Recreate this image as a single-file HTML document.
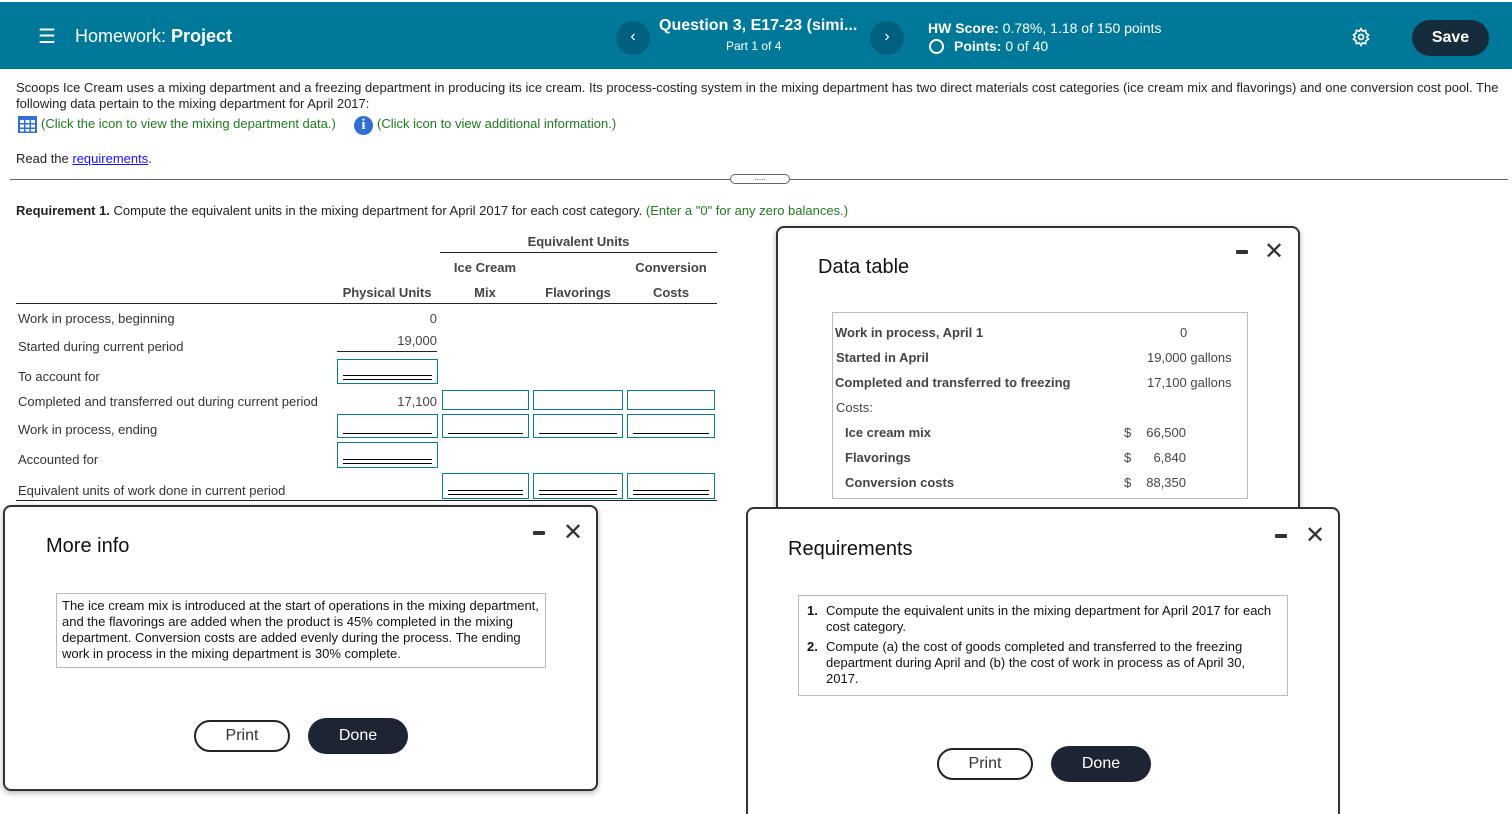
<!DOCTYPE html>
<html style="width:1512px;height:814px;overflow:hidden"><head><meta charset="utf-8"><style>
*{box-sizing:border-box;margin:0;padding:0}
body{width:1512px;height:814px;overflow:hidden;background:#fff;font-family:"Liberation Sans",Arial,sans-serif;color:#222;position:relative;font-size:13px}
.a{position:absolute;white-space:nowrap}
.hdr{position:absolute;left:0;top:2px;width:1512px;height:67px;background:#00789a;color:#fff}
.circ{position:absolute;width:34px;height:34px;border-radius:50%;background:#00607e;color:#fff;text-align:center;line-height:32px;font-size:16px}
.g{color:#1f7a1f}
.in{position:absolute;border:1px solid #0a7a9a;background:#fff;height:21px}
.in.s::after{content:"";position:absolute;left:5px;right:5px;bottom:3px;border-bottom:1px solid #000}
.in.d::after{content:"";position:absolute;left:5px;right:5px;bottom:3px;height:3px;border-top:1px solid #000;border-bottom:1px solid #000}
.lbl{position:absolute;left:18px;color:#333}
.th{position:absolute;font-weight:bold;color:#444;text-align:center}
.dlg{position:absolute;background:#fff;border:2px solid #333;border-radius:8px;box-shadow:0 2px 6px rgba(0,0,0,.3)}
.dlg h2{position:absolute;font-weight:normal;font-size:20px;color:#111}
.mn{position:absolute;width:12px;height:4px;background:#333;border-radius:1px}
.x{position:absolute;font-size:24px;color:#333;line-height:1}
.btn{position:absolute;border-radius:18px;font-size:16px;text-align:center}
.pr{border:2px solid #222;color:#333;background:#fff}
.dn{background:#1d2433;color:#fff}
.bx{position:absolute;border:1px solid #bbb}
</style></head><body>
<div class="hdr">
 <div class="a" style="left:38px;top:22px;font-size:20px">☰</div>
 <div class="a" style="left:75px;top:24px;font-size:18px">Homework: <b>Project</b></div>
 <div class="circ" style="left:616px;top:19px">‹</div>
 <div class="a" style="left:659px;top:15px;font-size:16px;font-weight:bold">Question 3, E17-23 (simi...</div>
 <div class="a" style="left:726px;top:37px;font-size:12px">Part 1 of 4</div>
 <div class="circ" style="left:870px;top:19px">›</div>
 <div class="a" style="left:928px;top:18px;font-size:14px"><b>HW Score:</b> 0.78%, 1.18 of 150 points</div>
 <div class="a" style="left:929px;top:37px;width:15px;height:15px;border:2px solid #fff;border-radius:50%"></div>
 <div class="a" style="left:954px;top:36px;font-size:14px"><b>Points:</b> 0 of 40</div>
 <svg class="a" style="left:1351px;top:25px" width="20" height="20" viewBox="0 0 24 24" fill="none" stroke="#fff" stroke-width="2"><circle cx="12" cy="12" r="3"/><path d="M12 2l2 3 3.5-1 .5 3.5 3 2-2 2.5 2 2.5-3 2-.5 3.5-3.5-1-2 3-2-3-3.5 1-.5-3.5-3-2 2-2.5-2-2.5 3-2 .5-3.5 3.5 1z"/></svg>
 <div class="a" style="left:1412px;top:18px;width:77px;height:36px;border-radius:18px;background:#152c3d;text-align:center;line-height:36px;font-weight:bold;font-size:16px">Save</div>
</div>
<div class="a" style="left:16px;top:80px;line-height:16px">Scoops Ice Cream uses a mixing department and a freezing department in producing its ice cream. Its process-costing system in the mixing department has two direct materials cost categories (ice cream mix and flavorings) and one conversion cost pool. The<br>following data pertain to the mixing department for April 2017:</div>
<svg class="a" style="left:18px;top:116px" width="19" height="17" viewBox="0 0 19 17"><rect x="0" y="0" width="19" height="17" fill="#2f6fd6"/><g fill="#fff"><rect x="2" y="4" width="4" height="3"/><rect x="7.5" y="4" width="4" height="3"/><rect x="13" y="4" width="4" height="3"/><rect x="2" y="8.5" width="4" height="3"/><rect x="7.5" y="8.5" width="4" height="3"/><rect x="13" y="8.5" width="4" height="3"/><rect x="2" y="13" width="4" height="2.5"/><rect x="7.5" y="13" width="4" height="2.5"/><rect x="13" y="13" width="4" height="2.5"/></g></svg>
<div class="a g" style="left:41px;top:116px">(Click the icon to view the mixing department data.)</div>
<div class="a" style="left:354px;top:116px;width:19px;height:19px;border-radius:50%;background:#2f6fd6;color:#fff;font-weight:bold;text-align:center;line-height:19px;font-family:'Liberation Serif',serif;font-size:15px">i</div>
<div class="a g" style="left:377px;top:116px">(Click icon to view additional information.)</div>
<div class="a" style="left:16px;top:151px">Read the <span style="color:#1a0dff;text-decoration:underline">requirements</span>.</div>
<div class="a" style="left:10px;top:179px;width:1498px;border-top:1px solid #666"></div>
<div class="a" style="left:730px;top:174px;width:60px;height:10px;border:1px solid #666;border-radius:5px;background:#fff;font-size:8px;text-align:center;line-height:6px">.....</div>
<div class="a" style="left:16px;top:203px"><b>Requirement 1.</b> Compute the equivalent units in the mixing department for April 2017 for each cost category. <span class="g">(Enter a "0" for any zero balances.)</span></div>

<div class="th" style="left:440px;top:234px;width:277px">Equivalent Units</div>
<div class="a" style="left:440px;top:252px;width:277px;border-top:1px solid #222"></div>
<div class="th" style="left:440px;top:260px;width:90px">Ice Cream</div>
<div class="th" style="left:625px;top:260px;width:92px">Conversion</div>
<div class="th" style="left:337px;top:285px;width:100px">Physical Units</div>
<div class="th" style="left:440px;top:285px;width:90px">Mix</div>
<div class="th" style="left:532px;top:285px;width:92px">Flavorings</div>
<div class="th" style="left:625px;top:285px;width:92px">Costs</div>
<div class="a" style="left:16px;top:303px;width:701px;border-top:1px solid #222"></div>
<div class="lbl" style="top:311px">Work in process, beginning</div>
<div class="a" style="left:337px;top:311px;width:100px;text-align:right;color:#444">0</div>
<div class="lbl" style="top:339px">Started during current period</div>
<div class="a" style="left:337px;top:333px;width:100px;text-align:right;color:#444">19,000</div>
<div class="a" style="left:337px;top:351px;width:100px;border-top:1px solid #222"></div>
<div class="lbl" style="top:369px">To account for</div>
<div class="in d" style="left:337px;top:359px;width:101px;height:25px"></div>
<div class="lbl" style="top:394px">Completed and transferred out during current period</div>
<div class="a" style="left:337px;top:394px;width:100px;text-align:right;color:#444">17,100</div>
<div class="in" style="left:442px;top:390px;width:87px;height:20px"></div>
<div class="in" style="left:533px;top:390px;width:90px;height:20px"></div>
<div class="in" style="left:627px;top:390px;width:88px;height:20px"></div>
<div class="lbl" style="top:422px">Work in process, ending</div>
<div class="in s" style="left:337px;top:414px;width:101px;height:24px"></div>
<div class="in s" style="left:442px;top:414px;width:87px;height:24px"></div>
<div class="in s" style="left:533px;top:414px;width:90px;height:24px"></div>
<div class="in s" style="left:627px;top:414px;width:88px;height:24px"></div>
<div class="lbl" style="top:452px">Accounted for</div>
<div class="in d" style="left:337px;top:442px;width:101px;height:26px"></div>
<div class="lbl" style="top:483px">Equivalent units of work done in current period</div>
<div class="in d" style="left:442px;top:473px;width:87px;height:26px"></div>
<div class="in d" style="left:533px;top:473px;width:90px;height:26px"></div>
<div class="in d" style="left:627px;top:473px;width:88px;height:26px"></div>
<div class="a" style="left:16px;top:500px;width:701px;border-top:1px solid #222"></div>

<div class="dlg" style="left:776px;top:226px;width:524px;height:330px">
 <h2 style="left:40px;top:28px">Data table</h2>
 <div class="mn" style="left:458px;top:22px"></div><div class="x" style="left:486px;top:12px">✕</div>
 <div class="bx" style="left:54px;top:84px;width:416px;height:187px"></div>
 <div class="a" style="left:57px;top:97px;font-weight:bold;color:#444">Work in process, April 1</div>
 <div class="a" style="left:402px;top:97px;color:#444">0</div>
 <div class="a" style="left:58px;top:122px;font-weight:bold;color:#444">Started in April</div>
 <div class="a" style="left:369px;top:122px;color:#444">19,000 gallons</div>
 <div class="a" style="left:57px;top:147px;font-weight:bold;color:#444">Completed and transferred to freezing</div>
 <div class="a" style="left:369px;top:147px;color:#444">17,100 gallons</div>
 <div class="a" style="left:58px;top:172px;color:#444">Costs:</div>
 <div class="a" style="left:67px;top:197px;font-weight:bold;color:#444">Ice cream mix</div>
 <div class="a" style="left:67px;top:222px;font-weight:bold;color:#444">Flavorings</div>
 <div class="a" style="left:67px;top:247px;font-weight:bold;color:#444">Conversion costs</div>
 <div class="a" style="left:346px;top:197px;color:#444">$</div><div class="a" style="left:346px;top:222px;color:#444">$</div><div class="a" style="left:346px;top:247px;color:#444">$</div>
 <div class="a" style="left:358px;top:197px;width:50px;text-align:right;color:#444">66,500</div>
 <div class="a" style="left:358px;top:222px;width:50px;text-align:right;color:#444">6,840</div>
 <div class="a" style="left:358px;top:247px;width:50px;text-align:right;color:#444">88,350</div>
</div>

<div class="dlg" style="left:3px;top:505px;width:595px;height:286px">
 <h2 style="left:41px;top:28px">More info</h2>
 <div class="mn" style="left:528px;top:24px"></div><div class="x" style="left:558px;top:14px">✕</div>
 <div class="bx" style="left:51px;top:86px;width:490px;height:75px"></div>
 <div class="a" style="left:57px;top:91px;line-height:16px;color:#111">The ice cream mix is introduced at the start of operations in the mixing department,<br>and the flavorings are added when the product is 45% completed in the mixing<br>department. Conversion costs are added evenly during the process. The ending<br>work in process in the mixing department is 30% complete.</div>
 <div class="btn pr" style="left:189px;top:213px;width:96px;height:32px;line-height:28px">Print</div>
 <div class="btn dn" style="left:303px;top:211px;width:100px;height:36px;line-height:36px">Done</div>
</div>

<div class="dlg" style="left:746px;top:507px;width:594px;height:307px;border-bottom:none;border-radius:8px 8px 0 0;box-shadow:none">
 <h2 style="left:40px;top:29px">Requirements</h2>
 <div class="mn" style="left:527px;top:25px"></div><div class="x" style="left:557px;top:15px">✕</div>
 <div class="bx" style="left:50px;top:86px;width:490px;height:101px"></div>
 <div class="a" style="left:59px;top:94px;line-height:16px;color:#111"><b>1.</b></div>
 <div class="a" style="left:78px;top:94px;line-height:16px;color:#111">Compute the equivalent units in the mixing department for April 2017 for each<br>cost category.</div>
 <div class="a" style="left:59px;top:130px;line-height:16px;color:#111"><b>2.</b></div>
 <div class="a" style="left:78px;top:130px;line-height:16px;color:#111">Compute (a) the cost of goods completed and transferred to the freezing<br>department during April and (b) the cost of work in process as of April 30,<br>2017.</div>
 <div class="btn pr" style="left:189px;top:239px;width:96px;height:32px;line-height:28px">Print</div>
 <div class="btn dn" style="left:303px;top:237px;width:100px;height:36px;line-height:36px">Done</div>
</div>
</body></html>
